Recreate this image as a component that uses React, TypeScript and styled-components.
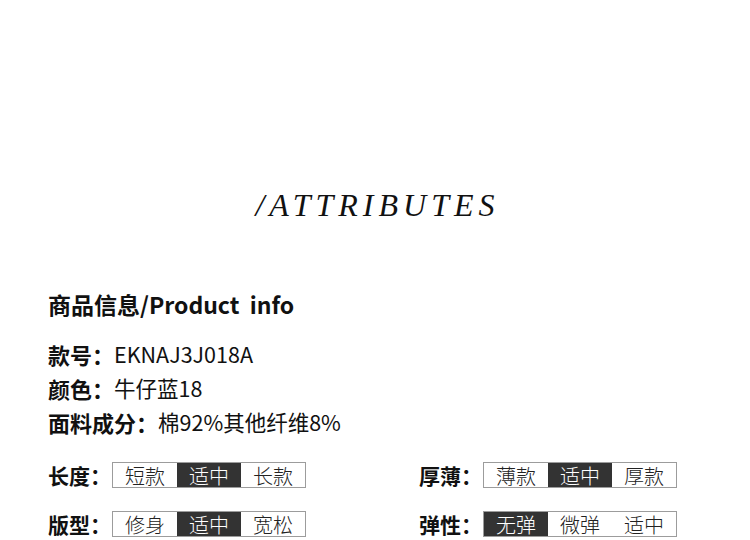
import styled, { createGlobalStyle } from "styled-components";

const GlobalStyle = createGlobalStyle`
  body {
    margin: 0;
    background: #ffffff;
    font-family: "Noto Sans CJK SC", "Noto Sans", sans-serif;
    color: #111111;
  }
`;

type Option = { label: string; active?: boolean };
type Attribute = { name: string; options: Option[] };

const info = [
  { name: "款号：", value: "EKNAJ3J018A" },
  { name: "颜色：", value: "牛仔蓝18" },
  { name: "面料成分：", value: "棉92%其他纤维8%" },
];

const attributes: Attribute[] = [
  {
    name: "长度：",
    options: [{ label: "短款" }, { label: "适中", active: true }, { label: "长款" }],
  },
  {
    name: "厚薄：",
    options: [{ label: "薄款" }, { label: "适中", active: true }, { label: "厚款" }],
  },
  {
    name: "版型：",
    options: [{ label: "修身" }, { label: "适中", active: true }, { label: "宽松" }],
  },
  {
    name: "弹性：",
    options: [{ label: "无弹", active: true }, { label: "微弹" }, { label: "适中" }],
  },
];

export default function App() {
  return (
    <Page>
      <GlobalStyle />
      <Title>/ATTRIBUTES</Title>
      <Heading>商品信息/Product&nbsp; info</Heading>
      <InfoList>
        {info.map((item) => (
          <InfoLine key={item.name}>
            <b>{item.name}</b>
            <span>{item.value}</span>
          </InfoLine>
        ))}
      </InfoList>
      <AttrGrid>
        {attributes.map((attr) => (
          <AttrRow key={attr.name}>
            <AttrLabel>{attr.name}</AttrLabel>
            <Selector>
              {attr.options.map((opt) => (
                <Cell key={opt.label} $active={opt.active}>
                  {opt.label}
                </Cell>
              ))}
            </Selector>
          </AttrRow>
        ))}
      </AttrGrid>
    </Page>
  );
}

const Page = styled.div`
  width: 750px;
  height: 540px;
  overflow: hidden;
  padding: 189px 0 0 48px;
  box-sizing: border-box;
`;

const Title = styled.h1`
  margin: 0 0 0 -43px;
  font-family: "Liberation Serif", serif;
  font-style: italic;
  font-weight: 400;
  font-size: 32px;
  line-height: 32px;
  letter-spacing: 5px;
  text-align: center;
  color: #111111;
`;

const Heading = styled.h2`
  margin: 68px 0 0;
  font-size: 23px;
  line-height: 30px;
  font-weight: 700;
  color: #111111;
`;

const InfoList = styled.div`
  display: flex;
  flex-direction: column;
  margin-top: 18px;
`;

const InfoLine = styled.div`
  display: flex;
  align-items: center;
  height: 34px;
  font-size: 22px;
  line-height: 34px;
  color: #111111;

  b {
    font-weight: 700;
  }

  span {
    font-size: 21.5px;
  }
`;

const AttrGrid = styled.div`
  display: grid;
  grid-template-columns: 371px 1fr;
  row-gap: 23px;
  margin-top: 23px;
`;

const AttrRow = styled.div`
  display: flex;
  align-items: center;
  height: 26px;
`;

const AttrLabel = styled.span`
  width: 64px;
  font-size: 21px;
  font-weight: 700;
  line-height: 26px;
  white-space: nowrap;
`;

const Selector = styled.div`
  display: flex;
  border: 1px solid #9c9c9c;
  height: 24px;
`;

const Cell = styled.span<{ $active?: boolean }>`
  width: 64px;
  display: flex;
  align-items: center;
  justify-content: center;
  font-size: 20px;
  font-weight: 300;
  background: ${(p) => (p.$active ? "#333333" : "#ffffff")};
  color: ${(p) => (p.$active ? "#ffffff" : "#222222")};
`;
